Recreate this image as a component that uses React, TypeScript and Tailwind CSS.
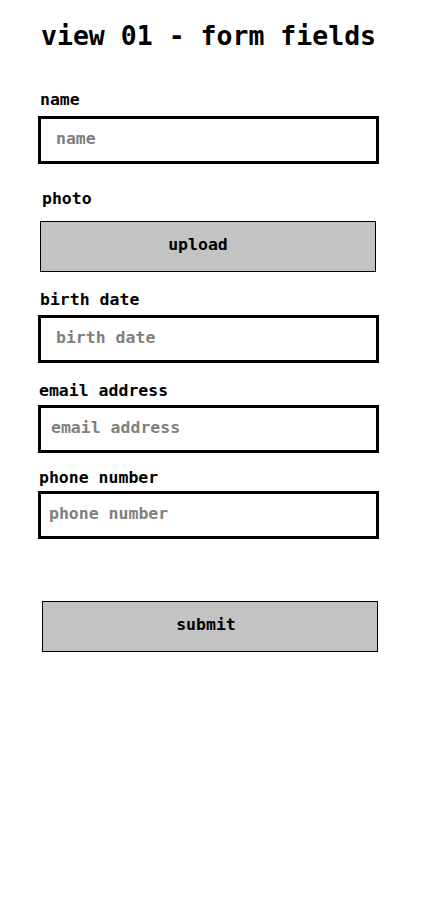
import React from "react";

function Field({
  label,
  labelClass,
  inputClass,
  padClass,
}: {
  label: string;
  labelClass: string;
  inputClass: string;
  padClass: string;
}) {
  return (
    <>
      <label className={`block h-[20px] text-[16.5px] leading-[20px] ${labelClass}`}>
        {label}
      </label>
      <input
        type="text"
        placeholder={label}
        className={`block h-[48px] w-[341px] border-[3px] border-black bg-white pb-[3px] text-[16.5px] font-bold text-black outline-none placeholder:text-[#808080] ${padClass} ${inputClass}`}
      />
    </>
  );
}

export default function App() {
  return (
    <div className="min-h-[911px] bg-white font-['DejaVu_Sans_Mono',monospace] font-bold text-black">
      <div className="flex flex-col pl-[38px] pt-[20px]">
        {/* Title */}
        <h1 className="ml-[3px] h-[32px] text-[26.5px] leading-[32px]">
          view 01 - form fields
        </h1>

        <div className="mt-[38px]">
          <Field label="name" labelClass="ml-[2px]" inputClass="mt-[6px]" padClass="pl-[15px]" />
        </div>

        {/* Photo */}
        <label className="ml-[4px] mt-[25px] block h-[20px] text-[16.5px] leading-[20px]">
          photo
        </label>
        <button className="ml-[2px] mt-[12px] h-[51px] w-[336px] border border-black bg-[#c3c3c3] pb-[3px] pr-[20px] text-[16.5px] font-bold">
          upload
        </button>

        <div className="mt-[18px]">
          <Field label="birth date" labelClass="ml-[2px]" inputClass="mt-[5px]" padClass="pl-[15px]" />
        </div>

        <div className="mt-[18px]">
          <Field label="email address" labelClass="ml-[1px]" inputClass="mt-[4px]" padClass="pl-[10px]" />
        </div>

        <div className="mt-[15px]">
          <Field label="phone number" labelClass="ml-[1px]" inputClass="mt-[3px]" padClass="pl-[8px]" />
        </div>

        {/* Submit */}
        <button className="ml-[4px] mt-[62px] h-[51px] w-[336px] border border-black bg-[#c3c3c3] pb-[2px] pr-[8px] text-[16.5px] font-bold">
          submit
        </button>
      </div>
    </div>
  );
}
